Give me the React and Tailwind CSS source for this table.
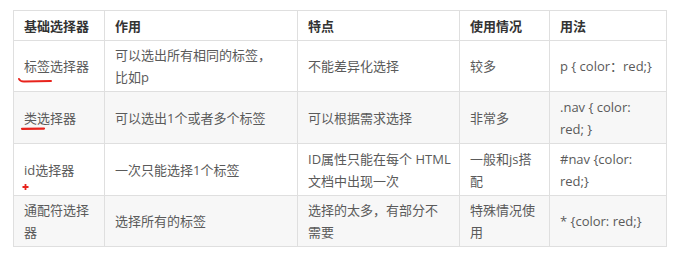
import React from "react";

const rows = [
  {
    c: [["标签选择器"], ["可以选出所有相同的标签，", "比如p"], ["不能差异化选择"], ["较多"], ["p { color：red;}"]],
    h: "h-[51px]",
    bg: "bg-white",
  },
  {
    c: [["类选择器"], ["可以选出1个或者多个标签"], ["可以根据需求选择"], ["非常多"], [".nav { color:", "red; }"]],
    h: "h-[52px]",
    bg: "bg-[#f7f7f7]",
  },
  {
    c: [["id选择器"], ["一次只能选择1个标签"], ["ID属性只能在每个 HTML", "文档中出现一次"], ["一般和js搭", "配"], ["#nav {color:", "red;}"]],
    h: "h-[52px]",
    bg: "bg-white",
  },
  {
    c: [["通配符选择", "器"], ["选择所有的标签"], ["选择的太多，有部分不", "需要"], ["特殊情况使", "用"], ["* {color: red;}"]],
    h: "h-[51px]",
    bg: "bg-[#f7f7f7]",
  },
];

const headers = ["基础选择器", "作用", "特点", "使用情况", "用法"];

export default function App() {
  return (
    <div
      className="w-[680px] h-[256px] bg-white overflow-hidden pt-[10px] pl-[13px]"
      style={{ fontFamily: '"Open Sans", "Noto Sans CJK SC", sans-serif' }}
    >
      <div className="relative w-[653px]">
        <table className="table-fixed border-collapse w-[653px] text-[13px] leading-[22px] text-[#5a5a5a]">
          <colgroup>
            <col className="w-[91px]" />
            <col className="w-[193px]" />
            <col className="w-[162px]" />
            <col className="w-[90px]" />
            <col className="w-[117px]" />
          </colgroup>
          <thead>
            <tr className="h-[30px] bg-white">
              {headers.map((h) => (
                <th
                  key={h}
                  className="border border-[#dfdfdf] px-[10px] py-0 text-left font-bold text-[#333] align-middle whitespace-nowrap"
                >
                  {h}
                </th>
              ))}
            </tr>
          </thead>
          <tbody>
            {rows.map((r, i) => (
              <tr key={i} className={`${r.h} ${r.bg}`}>
                {r.c.map((lines, j) => (
                  <td
                    key={j}
                    className="border border-[#dfdfdf] px-[10px] py-0 align-middle whitespace-nowrap"
                  >
                    {lines.map((l, k) => (
                      <div key={k}>{l}</div>
                    ))}
                  </td>
                ))}
              </tr>
            ))}
          </tbody>
        </table>
        <svg
          className="absolute left-0 top-0 pointer-events-none"
          width="653"
          height="246"
          viewBox="0 0 653 246"
        >
          <path
            d="M6 69 Q7 71.5 11 71.5 L38 71"
            fill="none"
            stroke="#e8231c"
            strokeWidth="2"
            strokeLinecap="round"
          />
          <path
            d="M9 118.8 L31 118.6"
            fill="none"
            stroke="#e8231c"
            strokeWidth="2.2"
            strokeLinecap="round"
          />
          <path
            d="M12.5 174 L12.5 180 M9.5 177 L15.5 177"
            fill="none"
            stroke="#e8231c"
            strokeWidth="1.8"
          />
        </svg>
      </div>
    </div>
  );
}
